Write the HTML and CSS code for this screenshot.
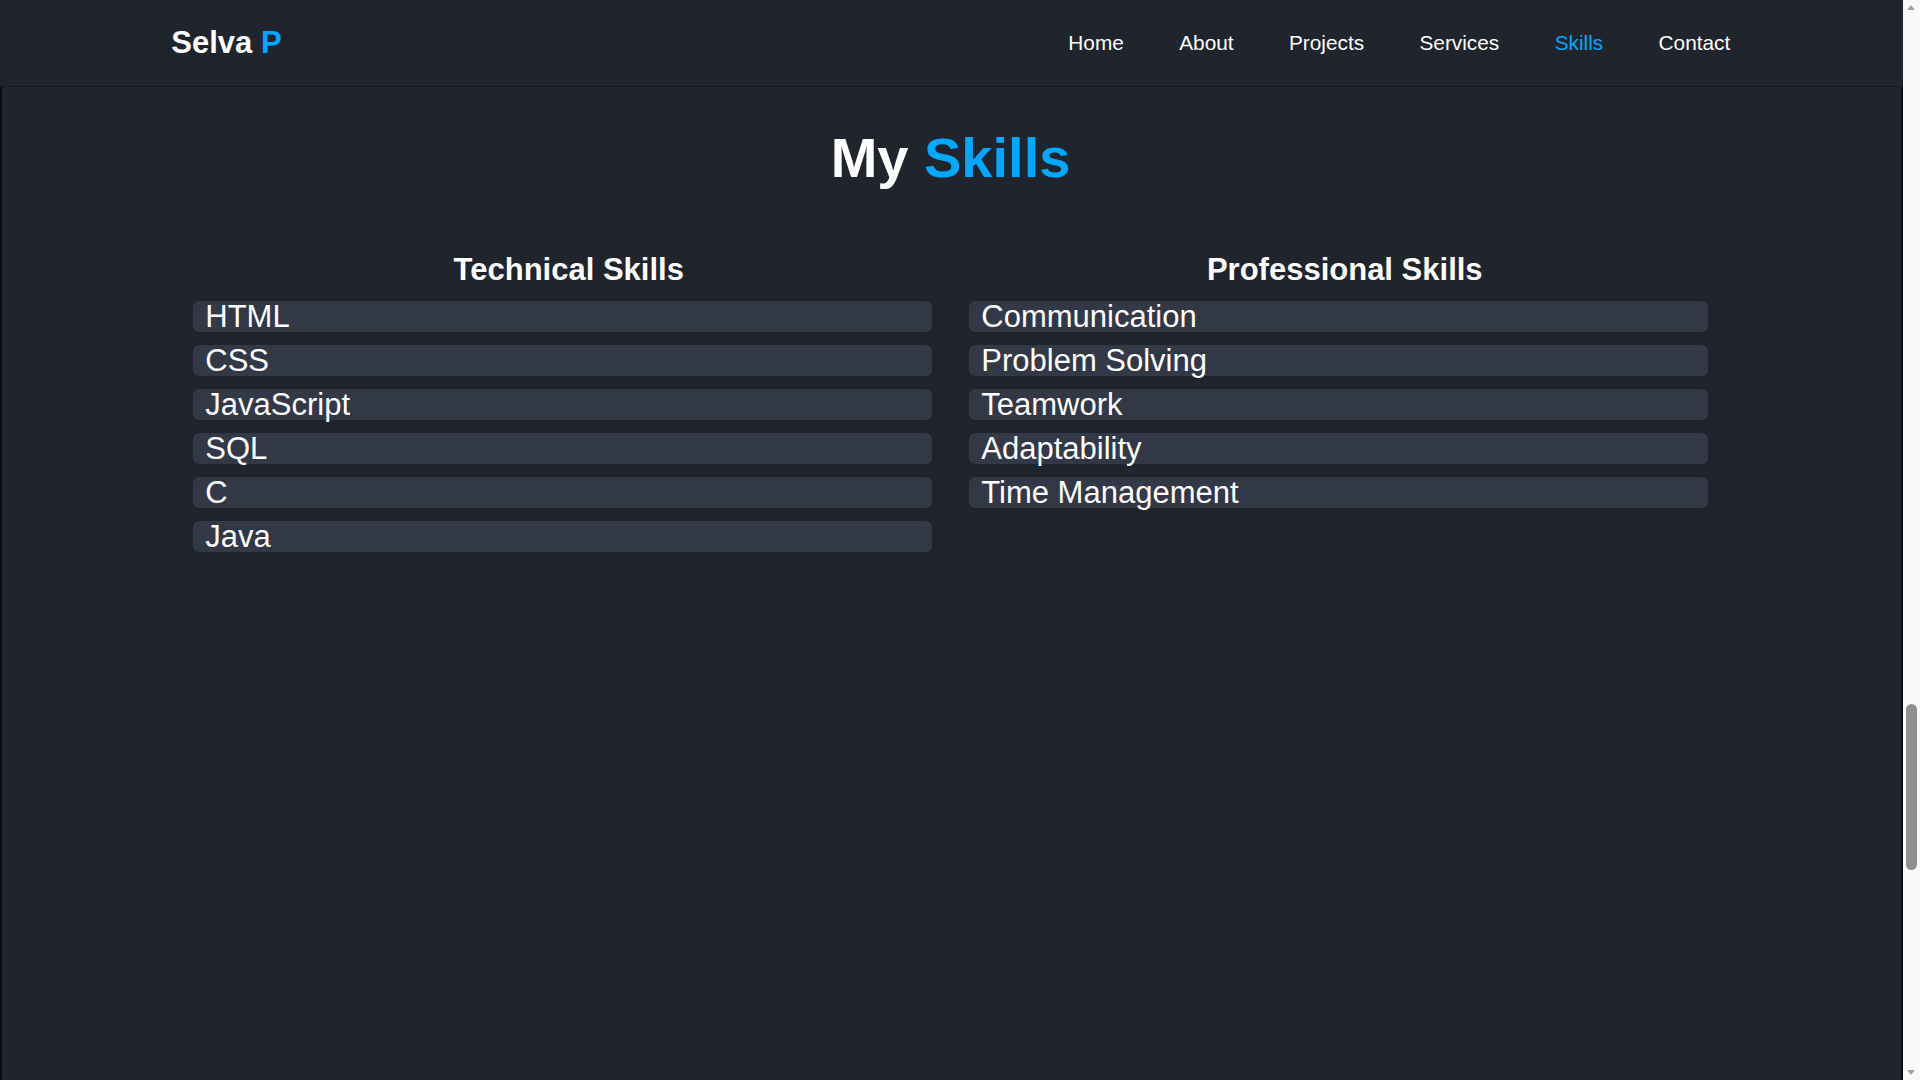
FILE: index.html
```html
<!DOCTYPE html>
<html lang="en">
<head>
<meta charset="utf-8">
<title>Selva P - Skills</title>
<link rel="stylesheet" href="styles.css">
</head>
<body>
<div class="page">
  <header class="header">
    <a class="logo" href="#">Selva <span class="accent">P</span></a>
    <nav class="nav">
      <a href="#">Home</a>
      <a href="#">About</a>
      <a href="#">Projects</a>
      <a href="#">Services</a>
      <a href="#" class="active">Skills</a>
      <a href="#">Contact</a>
    </nav>
  </header>
  <main class="skills-section">
    <h2 class="title">My <span class="accent">Skills</span></h2>
    <div class="skills-grid">
      <div class="skill-col">
        <h3 class="col-title">Technical Skills</h3>
        <ul class="skill-list">
          <li class="skill">HTML</li>
          <li class="skill">CSS</li>
          <li class="skill">JavaScript</li>
          <li class="skill">SQL</li>
          <li class="skill">C</li>
          <li class="skill">Java</li>
        </ul>
      </div>
      <div class="skill-col">
        <h3 class="col-title">Professional Skills</h3>
        <ul class="skill-list">
          <li class="skill">Communication</li>
          <li class="skill">Problem Solving</li>
          <li class="skill">Teamwork</li>
          <li class="skill">Adaptability</li>
          <li class="skill">Time Management</li>
        </ul>
      </div>
    </div>
  </main>
</div>
<div class="scrollbar" aria-hidden="true">
  <span class="arrow arrow-up"></span>
  <span class="thumb"></span>
  <span class="arrow arrow-down"></span>
</div>
</body>
</html>
```
FILE: styles.css
```css
html, body {
  margin: 0;
  height: 100%;
  background: #0b0d11;
  overflow: hidden;
}
body {
  font-family: "Liberation Sans", Arial, sans-serif;
  color: #fff;
}
.page {
  width: calc(100% - 17px);
  height: 100%;
  display: flex;
  flex-direction: column;
}
.accent {
  color: #00a8ff;
}
.header {
  height: 86px;
  flex-shrink: 0;
  border-bottom: 1px solid #16191f;
  background: #20242c;
  padding: 0 9%;
  display: flex;
  align-items: center;
  justify-content: space-between;
}
.logo {
  font-size: 31px;
  font-weight: 700;
  color: #fff;
  text-decoration: none;
}
.nav {
  display: flex;
  gap: 55.4px;
  margin-right: 1.5px;
}
.nav a {
  font-size: 20.8px;
  color: #fff;
  text-decoration: none;
}
.nav a.active {
  color: #00a8ff;
}
.skills-section {
  flex: 1;
  margin: 0 2px;
  background: #20242c;
  padding: 37.6px 9% 0;
}
.title {
  margin: 0 0 62px;
  padding-right: 2px;
  font-size: 56px;
  font-weight: 700;
  text-align: center;
}
.skills-grid {
  display: grid;
  grid-template-columns: 775px 775px;
  column-gap: 1px;
  margin-left: 8px;
}
.col-title {
  margin: 0 0 13px;
  font-size: 31px;
  font-weight: 700;
  text-align: center;
}
.skill-list {
  list-style: none;
  margin: 0 24px 0 12px;
  padding: 0;
  display: flex;
  flex-direction: column;
  gap: 13px;
}
.skill {
  background: #323846;
  border-radius: 6px;
  padding: 0 12px;
  font-size: 31px;
  line-height: 1;
}
.scrollbar {
  position: fixed;
  top: 0;
  right: 0;
  width: 17px;
  height: 100%;
  background: #f9f9f9;
}
.thumb {
  position: absolute;
  left: 3px;
  top: 704px;
  width: 11px;
  height: 166px;
  border-radius: 6px;
  background: #8f8f8f;
}
.arrow {
  position: absolute;
  left: 4px;
  width: 0;
  height: 0;
  border-left: 4.5px solid transparent;
  border-right: 4.5px solid transparent;
}
.arrow-up {
  top: 5px;
  border-bottom: 5px solid #a3a3a3;
}
.arrow-down {
  bottom: 5px;
  border-top: 5px solid #a3a3a3;
}
```
